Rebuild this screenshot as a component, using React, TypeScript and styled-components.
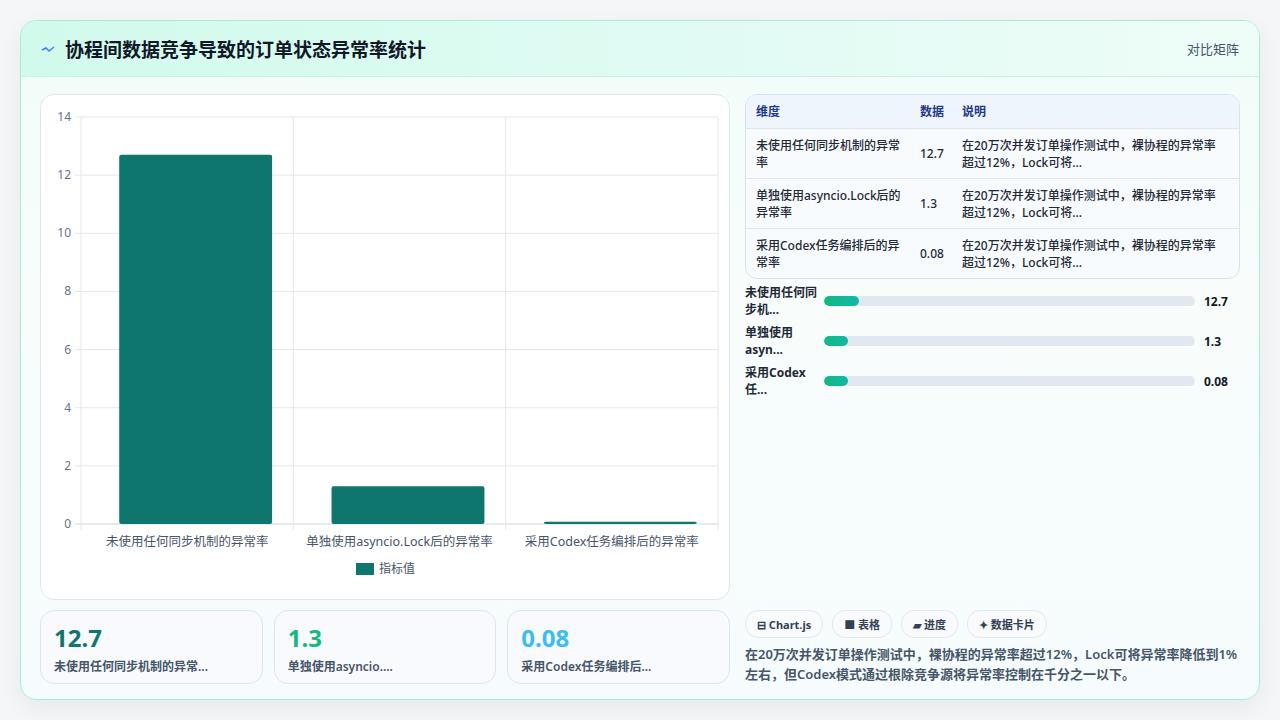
import React from "react";
import styled, { createGlobalStyle } from "styled-components";

const G = createGlobalStyle`
  html,body{margin:0;padding:0;background:#f4f6f8;}
  body{font-family:"Noto Sans","Noto Sans CJK SC",sans-serif;}
`;
const Page = styled.div`padding:20px;width:1280px;height:720px;box-sizing:border-box;`;
const Card = styled.div`
  height:680px;box-sizing:border-box;border:1px solid #a7ecd9;border-radius:16px;overflow:hidden;
  background:linear-gradient(180deg,#f0fdf8 0%,#f8fdfc 40%,#f6fcfd 100%);
  box-shadow:0 8px 24px rgba(0,0,0,0.06);display:flex;flex-direction:column;`;
const Header = styled.div`
  height:55px;flex:none;display:flex;align-items:center;justify-content:space-between;padding:0 20px;
  background:linear-gradient(90deg,#d1faec,#e2fbf4 60%,#effdf8);border-bottom:1px solid #c8f1e4;`;
const Title = styled.h1`margin:0;font-size:19px;font-weight:700;color:#111827;display:flex;align-items:center;gap:10px;`;
const Side = styled.span`font-size:13px;color:#475569;`;
const Body = styled.div`flex:1;display:grid;grid-template-columns:690px 495px;gap:15px;padding:17px 19px 17px 19px;`;
const Col = styled.div`display:flex;flex-direction:column;gap:10px;min-height:0;`;
const ChartBox = styled.div`height:504px;flex:none;background:#fff;border:1px solid #dfe7ef;border-radius:14px;position:relative;`;
const Stats = styled.div`display:grid;grid-template-columns:repeat(3,1fr);gap:11px;`;
const Stat = styled.div`height:74px;box-sizing:border-box;border:1px solid #dbe6f2;border-radius:14px;background:#f8fafd;padding:12px 13px;`;
const StatV = styled.div<{c:string}>`font-size:24px;font-weight:700;color:${p=>p.c};line-height:30px;`;
const StatL = styled.div`font-size:12px;font-weight:600;color:#475569;margin-top:4px;`;
const Table = styled.div`border:1px solid #d5e3ef;border-radius:12px;overflow:hidden;background:#f7fbfd;`;
const Row = styled.div<{h?:boolean}>`display:grid;grid-template-columns:164px 42px 1fr;align-items:center;
  padding:0 10px;min-height:${p=>p.h?33:49}px;font-size:12px;line-height:17px;color:${p=>p.h?"#1e3a8a":"#1f2937"};
  font-weight:${p=>p.h?700:500};background:${p=>p.h?"#eef5fd":"transparent"};
  border-top:${p=>p.h?"none":"1px solid #dde7f0"};& > span{padding-right:10px;}`;
const Bars = styled.div`display:flex;flex-direction:column;gap:4px;margin-top:4px;`;
const BarRow = styled.div`display:grid;grid-template-columns:79px 1fr 45px;align-items:center;height:36px;`;
const BarLabel = styled.div`font-size:12px;font-weight:700;color:#1f2937;line-height:17px;`;
const Track = styled.div`height:10px;border-radius:5px;background:#e2e8f0;overflow:hidden;`;
const Fill = styled.div`height:100%;border-radius:5px;background:linear-gradient(90deg,#10b981,#14b8a6);`;
const BarVal = styled.div`font-size:12px;font-weight:700;color:#111827;padding-left:9px;`;
const Spacer = styled.div`flex:1;`;
const Chips = styled.div`display:flex;gap:9px;`;
const Chip = styled.span`height:26px;padding:0 11px;border:1px solid #e2e8f0;border-radius:13px;background:#f8fafc;
  font-size:11px;font-weight:700;color:#334155;display:flex;align-items:center;gap:4px;`;
const Note = styled.p`margin:6px 0 0;font-size:13px;line-height:20px;color:#475569;font-weight:600;`;

const cats=["未使用任何同步机制的异常率","单独使用asyncio.Lock后的异常率","采用Codex任务编排后的异常率"];
const vals=[12.7,1.3,0.08];
const desc="在20万次并发订单操作测试中，裸协程的异常率超过12%，Lock可将...";

function Chart(){
  const x0=40,x1=677,y0=22,y1=429;
  const ys=(v:number)=>y1-(v/14)*(y1-y0);
  const w=(x1-x0)/3;
  return (
    <svg width="690" height="504" style={{display:"block"}}>
      {[0,2,4,6,8,10,12,14].map(t=>(
        <g key={t}>
          <line x1={x0-6} x2={x1} y1={ys(t)} y2={ys(t)} stroke={t===0?"#cbd5e1":"#e5e7eb"}/>
          <text x={x0-10} y={ys(t)+4} textAnchor="end" fontSize="12" fill="#64748b" fontFamily="Noto Sans">{t}</text>
        </g>
      ))}
      {[0,1,2,3].map(i=><line key={i} x1={x0+i*w} x2={x0+i*w} y1={y0} y2={y1+6} stroke="#e5e7eb"/>)}
      {vals.map((v,i)=>(
        <rect key={i} x={x0+i*w+w*0.18} width={w*0.72} y={ys(v)} height={y1-ys(v)} rx="2" fill="#0f766e"/>
      ))}
      {cats.map((c,i)=>(
        <text key={i} x={x0+i*w+w/2} y={451} textAnchor="middle" fontSize="12.5" fill="#475569" fontFamily="Noto Sans, Noto Sans CJK SC">{c}</text>
      ))}
      <rect x="315" y="468" width="18" height="12" fill="#0f766e"/>
      <text x="338" y="478" fontSize="12" fill="#475569" fontFamily="Noto Sans CJK SC">指标值</text>
    </svg>
  );
}

export default function App(){
  return (<>
    <G/>
    <Page><Card>
      <Header>
        <Title><svg width="14" height="10" viewBox="0 0 14 10"><path d="M1 6 L5 4 L8 7 L13 3" stroke="#3b82f6" strokeWidth="1.6" fill="none"/></svg>协程间数据竞争导致的订单状态异常率统计</Title>
        <Side>对比矩阵</Side>
      </Header>
      <Body>
        <Col>
          <ChartBox><Chart/></ChartBox>
          <Stats>
            <Stat><StatV c="#0f766e">12.7</StatV><StatL>未使用任何同步机制的异常...</StatL></Stat>
            <Stat><StatV c="#10b981">1.3</StatV><StatL>单独使用asyncio....</StatL></Stat>
            <Stat><StatV c="#38bdf8">0.08</StatV><StatL>采用Codex任务编排后...</StatL></Stat>
          </Stats>
        </Col>
        <Col style={{gap:0}}>
          <Table>
            <Row h><span>维度</span><span>数据</span><span>说明</span></Row>
            {cats.map((c,i)=>(
              <Row key={i}><span>{c}</span><span>{vals[i]}</span><span>{desc}</span></Row>
            ))}
          </Table>
          <Bars>
            {[["未使用任何同步机...",7],["单独使用asyn...",6],["采用Codex任...",6]].map(([l,p],i)=>(
              <BarRow key={i}><BarLabel>{l}</BarLabel><Track><Fill style={{width:`${i===0?9.5:6.4}%`}}/></Track><BarVal>{vals[i]}</BarVal></BarRow>
            ))}
          </Bars>
          <Spacer/>
          <Chips>
            <Chip>⊟ Chart.js</Chip><Chip>■ 表格</Chip><Chip>▰ 进度</Chip><Chip>✦ 数据卡片</Chip>
          </Chips>
          <Note>在20万次并发订单操作测试中，裸协程的异常率超过12%，Lock可将异常率降低到1%左右，但Codex模式通过根除竞争源将异常率控制在千分之一以下。</Note>
        </Col>
      </Body>
    </Card></Page>
  </>);
}
